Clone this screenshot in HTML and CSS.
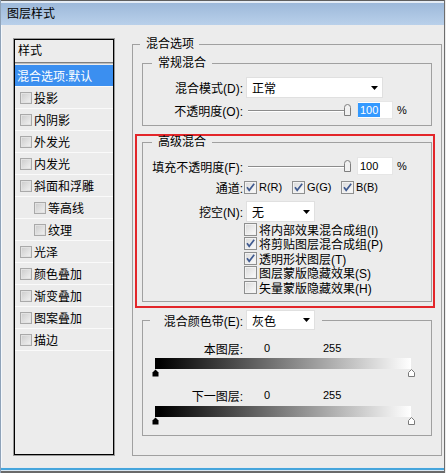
FILE: index.html
```html
<!DOCTYPE html>
<html lang="zh-CN">
<head>
<meta charset="utf-8">
<title>图层样式</title>
<link rel="stylesheet" href="styles.css">
</head>
<body>
<div class="win">
  <div class="titlebar">图层样式</div>
  <div class="main">
    <div class="list">
      <div class="list-head">样式</div>
      <div class="item sel">混合选项:默认</div>
      <div class="item"><span class="lcb"></span>投影</div>
      <div class="item"><span class="lcb"></span>内阴影</div>
      <div class="item"><span class="lcb"></span>外发光</div>
      <div class="item"><span class="lcb"></span>内发光</div>
      <div class="item"><span class="lcb"></span>斜面和浮雕</div>
      <div class="item sub"><span class="lcb"></span>等高线</div>
      <div class="item sub"><span class="lcb"></span>纹理</div>
      <div class="item"><span class="lcb"></span>光泽</div>
      <div class="item"><span class="lcb"></span>颜色叠加</div>
      <div class="item"><span class="lcb"></span>渐变叠加</div>
      <div class="item"><span class="lcb"></span>图案叠加</div>
      <div class="item"><span class="lcb"></span>描边</div>
    </div>

    <fieldset class="grp outer">
      <legend class="lg-outer">混合选项</legend>

      <fieldset class="grp g1">
        <legend class="lg">常规混合</legend>
        <div class="row h21">
          <span class="lbl">混合模式(D):</span>
          <div class="dd dd-wide"><span>正常</span><svg class="arr" viewBox="0 0 7 4"><polygon points="0,0 7,0 3.5,4"/></svg></div>
        </div>
        <div class="row h18 mt3">
          <span class="lbl">不透明度(O):</span>
          <div class="slider"><span class="track"></span><svg class="thumb" viewBox="0 0 9 12"><path d="M1.5 11.5V3.5Q1.5 0.5 4.5 0.5Q7.5 0.5 7.5 3.5V11.5Z"/></svg></div>
          <div class="num"><span class="val hl">100</span></div>
          <span class="pct">%</span>
        </div>
      </fieldset>

      <div class="mark">
        <fieldset class="grp g2">
          <legend class="lg lg-small">高级混合</legend>
          <div class="row h18">
            <span class="lbl">填充不透明度(F):</span>
            <div class="slider"><span class="track"></span><svg class="thumb" viewBox="0 0 9 12"><path d="M1.5 11.5V3.5Q1.5 0.5 4.5 0.5Q7.5 0.5 7.5 3.5V11.5Z"/></svg></div>
            <div class="num"><span class="val">100</span></div>
            <span class="pct">%</span>
          </div>
          <div class="row h14 mt5">
            <span class="lbl">通道:</span>
            <div class="chans">
              <span class="chk"><span class="cb"><svg viewBox="0 0 11 11"><path d="M2 5.3L4.2 8.3L9.2 1.8"/></svg></span><span class="ct">R(R)</span></span>
              <span class="chk"><span class="cb"><svg viewBox="0 0 11 11"><path d="M2 5.3L4.2 8.3L9.2 1.8"/></svg></span><span class="ct">G(G)</span></span>
              <span class="chk"><span class="cb"><svg viewBox="0 0 11 11"><path d="M2 5.3L4.2 8.3L9.2 1.8"/></svg></span><span class="ct">B(B)</span></span>
            </div>
          </div>
          <div class="row h21 mt7">
            <span class="lbl">挖空(N):</span>
            <div class="dd dd-small"><span>无</span><svg class="arr" viewBox="0 0 7 4"><polygon points="0,0 7,0 3.5,4"/></svg></div>
          </div>
          <div class="opts">
            <div class="opt"><span class="cb"></span><span class="ct">将内部效果混合成组(I)</span></div>
            <div class="opt"><span class="cb"><svg viewBox="0 0 11 11"><path d="M2 5.3L4.2 8.3L9.2 1.8"/></svg></span><span class="ct">将剪贴图层混合成组(P)</span></div>
            <div class="opt"><span class="cb"><svg viewBox="0 0 11 11"><path d="M2 5.3L4.2 8.3L9.2 1.8"/></svg></span><span class="ct">透明形状图层(T)</span></div>
            <div class="opt"><span class="cb"></span><span class="ct">图层蒙版隐藏效果(S)</span></div>
            <div class="opt"><span class="cb"></span><span class="ct">矢量蒙版隐藏效果(H)</span></div>
          </div>
        </fieldset>
      </div>

      <fieldset class="grp g3">
        <legend class="lg-dd">
          <span class="lbl2">混合颜色带(E):</span>
          <div class="dd dd-small"><span>灰色</span><svg class="arr" viewBox="0 0 7 4"><polygon points="0,0 7,0 3.5,4"/></svg></div>
        </legend>
        <div class="row h14 mt11">
          <span class="lbl">本图层:</span>
          <span class="v0">0</span>
          <span class="v255">255</span>
        </div>
        <div class="grad mt3"></div>
        <div class="thumbs">
          <svg viewBox="0 0 7 8"><path class="tb" d="M0.5 7.5V3.5L3.5 0.5L6.5 3.5V7.5Z"/></svg>
          <svg viewBox="0 0 7 8"><path class="tw" d="M0.5 7.5V3.5L3.5 0.5L6.5 3.5V7.5Z"/></svg>
        </div>
        <div class="row h14 mt11">
          <span class="lbl">下一图层:</span>
          <span class="v0">0</span>
          <span class="v255">255</span>
        </div>
        <div class="grad mt4"></div>
        <div class="thumbs">
          <svg viewBox="0 0 7 8"><path class="tb" d="M0.5 7.5V3.5L3.5 0.5L6.5 3.5V7.5Z"/></svg>
          <svg viewBox="0 0 7 8"><path class="tw" d="M0.5 7.5V3.5L3.5 0.5L6.5 3.5V7.5Z"/></svg>
        </div>
      </fieldset>
    </fieldset>
  </div>
  <div class="foot"></div>
</div>
</body>
</html>
```

FILE: styles.css
```css
html, body {
  margin: 0;
  background: #ececec;
}
body {
  font: 12px "Liberation Sans", "Noto Sans CJK SC", sans-serif;
  color: #000;
}
.win {
  width: 445px;
  height: 473px;
  box-sizing: border-box;
  border-left: 1px solid #8ea2b8;
  border-right: 1px solid #6d6d6d;
  display: flex;
  flex-direction: column;
  background: #ececec;
}
.titlebar {
  height: 25px;
  box-sizing: border-box;
  border-top: 1px solid #5f5f5f;
  background: linear-gradient(#e4ecf5 0, #e4ecf5 2px, #9db9da 2px, #b9d0ea 100%);
  padding-left: 6px;
  line-height: 26px;
  flex: none;
}
.main {
  flex: 1;
  display: flex;
  align-items: flex-start;
  padding-left: 13px;
  box-shadow: inset 1px 0 0 #f4f8fc;
}
.foot {
  height: 6px;
  flex: none;
  background: linear-gradient(#e6ebf0 0, #e6ebf0 1px, #45a5dc 1px, #45a5dc 3px, #d9e6f1 3px, #d9e6f1 4px, #6a6a6a 4px, #6a6a6a 6px);
}

/* style list */
.list {
  margin-top: 14px;
  width: 100px;
  height: 416px;
  box-sizing: border-box;
  border: 1px solid #000;
  box-shadow: 0 0 0 1px #9a9a9a;
  flex: none;
}
.list-head {
  height: 22px;
  line-height: 22px;
  padding-left: 3px;
  border-bottom: 1px solid #7f7f7f;
  box-shadow: 0 1px 0 #bdbdbd;
}
.item {
  height: 21px;
  border-bottom: 1px solid #fafafa;
  display: flex;
  align-items: center;
  padding-left: 5px;
}
.item.sel {
  margin-top: 2px;
  background: #3b8ff0;
  color: #fff;
  padding-left: 2px;
}
.item.sub {
  padding-left: 19px;
}
.lcb {
  width: 12px;
  height: 12px;
  box-sizing: border-box;
  border: 1px solid #a9a9a9;
  background: linear-gradient(135deg, #cbcbcb, #f2f2f2);
  box-shadow: inset 0 0 0 1px #e2e2e2;
  margin-right: 2px;
  flex: none;
}

/* group boxes */
fieldset.grp {
  margin: 0;
  padding: 0;
  border: 1px solid #a0a0a0;
  min-width: 0;
  box-sizing: border-box;
}
fieldset.outer {
  margin: 11px 0 0 18px;
  width: 310px;
  height: 420px;
  flex: none;
}
.lg-outer {
  margin-left: 7px;
  padding: 0 5px 0 6px;
  line-height: 16px;
}
.lg {
  margin-left: 9px;
  padding: 0 6px;
  line-height: 16px;
}
.lg.lg-small {
  line-height: 12px;
}
fieldset.g1 {
  margin: 3px 9px 0;
  padding: 6px 0;
}
.mark {
  margin: 8px 6px 0 2px;
  border: 2px solid #e3262a;
  padding: 0 1px 4px 5px;
}
fieldset.g2 {
  padding: 9px 0 6.5px;
}
fieldset.g3 {
  margin: 2px 9px 0;
  padding: 0 0 10px;
}
.lg-dd {
  margin-left: 7px;
  padding: 0 7px 0 0;
  display: flex;
  align-items: center;
}
.lbl2 {
  width: 93px;
  text-align: right;
  margin-right: 3px;
  white-space: nowrap;
}

/* rows */
.row {
  display: flex;
  align-items: center;
}
.h21 { height: 21px; }
.h18 { height: 18px; }
.h14 { height: 14px; }
.mt3 { margin-top: 3px; }
.mt4 { margin-top: 4px; }
.mt5 { margin-top: 5px; }
.mt7 { margin-top: 7px; }
.mt11 { margin-top: 11px; }
.lbl {
  width: 100px;
  text-align: right;
  flex: none;
  white-space: nowrap;
}

/* dropdown */
.dd {
  height: 21px;
  box-sizing: border-box;
  background: #fff;
  border: 1px solid #e0e0e0;
  margin-left: 3px;
  display: flex;
  align-items: center;
  justify-content: space-between;
  padding: 0 4px 0 5px;
  flex: none;
}
.lg-dd .dd {
  height: 20px;
  margin-left: 0;
}
.dd-wide { width: 137px; }
.dd-small { width: 69px; }
.arr {
  width: 7px;
  height: 4px;
  fill: #000;
}

/* slider + number */
.slider {
  position: relative;
  width: 106px;
  height: 18px;
  margin-left: 4px;
  display: flex;
  align-items: center;
  flex: none;
}
.track {
  display: block;
  margin: 0 3px 0 1px;
  flex: 1;
  height: 1px;
  background: #8c8c8c;
  box-shadow: 0 1px 0 #fff;
}
.thumb {
  position: absolute;
  right: 1px;
  top: 3px;
  width: 9px;
  height: 12px;
  fill: #f1f1f1;
  stroke: #7e7e7e;
}
.num {
  width: 36px;
  height: 18px;
  box-sizing: border-box;
  margin-left: 4px;
  background: #fff;
  border: 1px solid #e6e6e6;
  padding-left: 0;
  display: flex;
  align-items: center;
  font-size: 11px;
  flex: none;
}
.val {
  padding: 0 2px;
  line-height: 14px;
}
.val.hl {
  background: #3399ff;
  color: #fff;
}
.pct {
  margin-left: 4px;
  font-size: 11px;
}

/* checkboxes */
.cb {
  width: 13px;
  height: 13px;
  box-sizing: border-box;
  border: 1px solid #8e8f8f;
  background: linear-gradient(135deg, #d9d9d9, #fcfcfc);
  box-shadow: inset 0 0 0 1px #f2f2f2;
  display: inline-flex;
  flex: none;
}
.cb svg {
  width: 11px;
  height: 11px;
  fill: none;
  stroke: #3f5a90;
  stroke-width: 1.7;
}
.ct {
  margin-left: 2px;
  white-space: nowrap;
  font-size: 11px;
}
.opt .ct {
  font-size: 12px;
}
.chans {
  margin-left: 1px;
  display: grid;
  grid-template-columns: 48px 49px auto;
}
.chk {
  display: flex;
  align-items: center;
}
.opts {
  margin-left: 101px;
}
.opt {
  height: 14.5px;
  display: flex;
  align-items: center;
}

/* blend-if */
.v0 {
  margin-left: 21px;
  width: 59px;
  font-size: 11px;
}
.v255 {
  font-size: 11px;
}
.grad {
  margin-left: 12px;
  width: 256px;
  height: 11px;
  background: linear-gradient(to right, #000 0, #000 2%, #fff 100%);
}
.thumbs {
  margin-left: 9px;
  width: 263px;
  height: 8px;
  display: flex;
  justify-content: space-between;
}
.thumbs svg {
  width: 7px;
  height: 8px;
}
.tb {
  fill: #000;
}
.tw {
  fill: #fff;
  stroke: #7a7a7a;
}
```
